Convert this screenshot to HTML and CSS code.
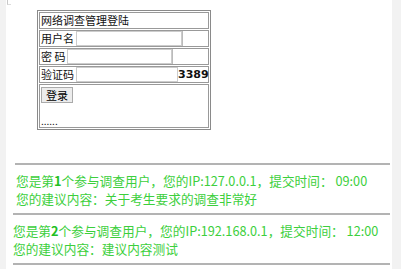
FILE: index.html
```html
<!doctype html>
<html lang="zh-CN">
<head>
    <meta charset="UTF-8">
    <title>网络调查管理登陆</title>
    <link rel="stylesheet" href="styles.css">
</head>
<body>
    <div class="page">
        <span class="mark"></span>
        <form class="login">
            <div class="row title">网络调查管理登陆</div>
            <div class="row">
                <label class="cell lbl">用户名</label>
                <input class="field user" type="text">
                <span class="cell rest"></span>
            </div>
            <div class="row">
                <label class="cell lbl">密 码</label>
                <input class="field pass" type="password">
                <span class="cell rest"></span>
            </div>
            <div class="row">
                <label class="cell lbl">验证码</label>
                <input class="field code" type="text">
                <b class="captcha">3389</b>
            </div>
            <div class="row submit">
                <button type="button" class="btn">登录</button>
                <span class="dots">......</span>
            </div>
        </form>

        <div class="entries">
            <div class="entry">
                <p>您是第<b>1</b>个参与调查用户，您的IP:127.0.0.1，提交时间： 09:00</p>
                <p>您的建议内容：关于考生要求的调查非常好</p>
            </div>
            <div class="entry">
                <p>您是第<b>2</b>个参与调查用户，您的IP:192.168.0.1，提交时间： 12:00</p>
                <p>您的建议内容：建议内容测试</p>
            </div>
        </div>
    </div>
</body>
</html>
```

FILE: styles.css
```css
body {
    margin: 0;
    background: #f2f2f2;
    font-family: "Noto Sans CJK SC", "Liberation Sans", sans-serif;
}
.page {
    position: relative;
    background: #fff;
    margin: 0 9px 0 6px;
    min-height: 269px;
    padding-top: 10px;
    box-sizing: border-box;
}
.mark {
    position: absolute;
    left: 1px;
    top: 0;
    width: 3px;
    height: 4px;
    border-left: 1px solid #c8c8c8;
    border-bottom: 1px solid #dcdcdc;
}
.login {
    width: 174px;
    box-sizing: border-box;
    margin-left: 31px;
    border: 1px solid #8a8a8a;
    padding: 1px;
    display: flex;
    flex-direction: column;
    gap: 1px;
    font-size: 11px;
    color: #111;
}
.row {
    display: flex;
    align-items: center;
    border: 1px solid #999;
    height: 17px;
    box-sizing: border-box;
    line-height: 15px;
    white-space: nowrap;
}
.title {
    padding-left: 1px;
}
.lbl {
    flex-shrink: 0;
    padding: 0 2px 0 1px;
}
.field {
    flex-shrink: 0;
    height: 15px;
    box-sizing: border-box;
    border: 1px solid #ccc;
    padding: 0;
    margin: 0;
}
.user { width: 106px; }
.pass { width: 105px; }
.code { width: 102px; }
.rest {
    flex: 1;
    align-self: stretch;
    border-left: 1px solid #bbb;
}
.captcha {
    margin-left: auto;
    padding-right: 1px;
    font-family: "DejaVu Sans", sans-serif;
    font-size: 11px;
}
.submit {
    height: 44px;
    flex-direction: column;
    align-items: flex-start;
    justify-content: space-between;
    padding: 1px 1px 0;
}
.btn {
    font: inherit;
    font-size: 11px;
    line-height: 13px;
    background: #ececec;
    border: 1px solid #aaa;
    padding: 0 4px;
    height: 16px;
    margin-top: 1px;
}
.dots {
    font-size: 10px;
    line-height: 12px;
}
.entries {
    margin-top: 33px;
}
.entry {
    border-top: 2px solid #b3b3b3;
    margin: 0 2px 0 9px;
    padding: 7px 0 5px 1px;
    color: #3ccf3c;
    font-size: 12.7px;
    line-height: 18px;
    white-space: nowrap;
}
.entry + .entry {
    padding-left: 0;
    margin-left: 7px;
}
.entry:last-child {
    border-bottom: 2px solid #b3b3b3;
}
.entry p {
    margin: 0;
}
.entry b {
    color: #22c022;
}
```
